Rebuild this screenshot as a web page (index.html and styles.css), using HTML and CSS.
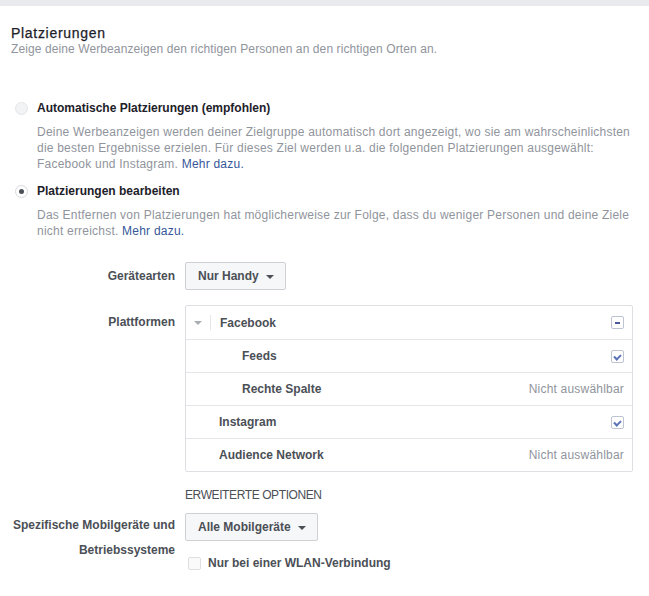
FILE: index.html
```html
<!DOCTYPE html>
<html lang="de">
<head>
<meta charset="utf-8">
<title>Platzierungen</title>
<link rel="stylesheet" href="styles.css">
</head>
<body>
<div class="topband"></div>
<section class="placements">
  <h2 class="title">Platzierungen</h2>
  <p class="subtitle">Zeige deine Werbeanzeigen den richtigen Personen an den richtigen Orten an.</p>

  <div class="option option-first">
    <label class="radio-row"><span class="radio"></span><span class="radio-label">Automatische Platzierungen (empfohlen)</span></label>
    <p class="desc">Deine Werbeanzeigen werden deiner Zielgruppe automatisch dort angezeigt, wo sie am wahrscheinlichsten<br>die besten Ergebnisse erzielen. Für dieses Ziel werden u.a. die folgenden Platzierungen ausgewählt:<br>Facebook und Instagram. <a href="#">Mehr dazu.</a></p>
  </div>

  <div class="option">
    <label class="radio-row"><span class="radio checked"></span><span class="radio-label">Platzierungen bearbeiten</span></label>
    <p class="desc">Das Entfernen von Platzierungen hat möglicherweise zur Folge, dass du weniger Personen und deine Ziele<br>nicht erreichst. <a href="#">Mehr dazu.</a></p>
  </div>

  <div class="field field-devices">
    <div class="field-label">Gerätearten</div>
    <div class="field-body">
      <button class="select">Nur Handy <span class="caret"></span></button>
    </div>
  </div>

  <div class="field field-platforms">
    <div class="field-label label-row">Plattformen</div>
    <div class="field-body">
      <div class="platforms">
        <div class="prow">
          <span class="toggle"><span class="caret caret-light"></span></span>
          <span class="pname">Facebook</span>
          <span class="cbox minus"></span>
        </div>
        <div class="prow sub">
          <span class="pname">Feeds</span>
          <span class="cbox checked"></span>
        </div>
        <div class="prow sub">
          <span class="pname">Rechte Spalte</span>
          <span class="na">Nicht auswählbar</span>
        </div>
        <div class="prow top">
          <span class="pname">Instagram</span>
          <span class="cbox checked"></span>
        </div>
        <div class="prow top">
          <span class="pname">Audience Network</span>
          <span class="na">Nicht auswählbar</span>
        </div>
      </div>
    </div>
  </div>

  <div class="field field-advanced">
    <div class="field-label"></div>
    <div class="field-body"><div class="advanced">ERWEITERTE OPTIONEN</div></div>
  </div>

  <div class="field field-mobile">
    <div class="field-label label-multi">Spezifische Mobilgeräte und Betriebssysteme</div>
    <div class="field-body">
      <button class="select">Alle Mobilgeräte <span class="caret"></span></button>
      <label class="wifi"><span class="cbox empty"></span><span class="wifi-label">Nur bei einer WLAN-Verbindung</span></label>
    </div>
  </div>
</section>
</body>
</html>
```

FILE: styles.css
```css
* { box-sizing: border-box; }

html, body {
  margin: 0;
  padding: 0;
  background: #ffffff;
}

body {
  font-family: "Liberation Sans", Arial, Helvetica, sans-serif;
  font-size: 12px;
  line-height: 16px;
  color: #1d2129;
}

.topband {
  height: 6px;
  background: #e9eaed;
}

.placements {
  padding: 19px 16px 0 11px;
}

.title {
  margin: 0;
  font-size: 14px;
  line-height: 16px;
  font-weight: normal;
  letter-spacing: 0.7px;
  color: #1d2129;
  -webkit-text-stroke: 0.25px #1d2129;
}

.subtitle {
  margin: 0;
  color: #90949c;
  letter-spacing: 0.1px;
}

.option {
  padding-left: 4px;
}

.option-first { margin-top: 43px; }
.option + .option { margin-top: 11px; }

.radio-row {
  display: flex;
  align-items: center;
  gap: 9px;
  font-weight: bold;
  color: #1d2129;
}

.radio {
  width: 13px;
  height: 13px;
  border-radius: 50%;
  border: 1px solid #e4e5e8;
  background: #f2f3f5;
  position: relative;
  flex: none;
}

.radio.checked {
  background: #ffffff;
  border-color: #d7d9dd;
}

.radio.checked::after {
  content: "";
  position: absolute;
  left: 3px;
  top: 3px;
  width: 5px;
  height: 5px;
  border-radius: 50%;
  background: #4b4f56;
}

.desc {
  margin: 8px 0 0 22px;
  color: #90949c;
  letter-spacing: 0.22px;
  white-space: nowrap;
}

.desc a {
  color: #365899;
  text-decoration: none;
}

.field {
  display: grid;
  grid-template-columns: 174px 1fr;
  column-gap: 0;
}

.field-label {
  text-align: right;
  padding-right: 10px;
  font-weight: bold;
  color: #4b4f56;
}

.field-devices {
  margin-top: 23px;
  align-items: center;
}

.field-platforms { margin-top: 15px; }

.label-row { padding-top: 9px; }

.select {
  display: inline-flex;
  align-items: center;
  gap: 7px;
  height: 28px;
  padding: 0 11px 0 12px;
  background: #f6f7f9;
  border: 1px solid #ced0d4;
  border-radius: 2px;
  font-family: inherit;
  font-size: 12px;
  font-weight: bold;
  color: #4b4f56;
}

.caret {
  width: 0;
  height: 0;
  border-left: 4px solid transparent;
  border-right: 4px solid transparent;
  border-top: 4px solid #4b4f56;
  margin-top: 1px;
}

.caret-light { border-top-color: #a9adb4; }

.platforms {
  border: 1px solid #dddfe2;
  border-radius: 2px;
}

.prow {
  display: flex;
  align-items: center;
  height: 33px;
  padding: 0 8px 0 33px;
  border-top: 1px solid #e5e6e9;
  font-weight: bold;
  color: #4b4f56;
}

.prow:first-child {
  border-top: none;
  padding-left: 8px;
}

.prow.sub { padding-left: 56px; }

.toggle {
  display: flex;
  align-items: center;
  height: 15px;
  padding-right: 8px;
  margin-right: 9px;
  border-right: 1px solid #e5e6e9;
}

.pname { flex: 1; }

.na {
  font-weight: normal;
  color: #90949c;
  letter-spacing: 0.2px;
}

.cbox {
  width: 13px;
  height: 13px;
  border: 1px solid #bec3d1;
  border-radius: 2px;
  background: #ffffff;
  position: relative;
  flex: none;
}

.cbox.minus::after {
  content: "";
  position: absolute;
  left: 3px;
  top: 5px;
  width: 5px;
  height: 2px;
  background: #4a5a9a;
}

.cbox.checked::after {
  content: "";
  position: absolute;
  left: 3px;
  top: 2px;
  width: 3px;
  height: 5px;
  border-right: 2px solid #5b74b8;
  border-bottom: 2px solid #5b74b8;
  transform: rotate(45deg);
}

.cbox.empty {
  border-color: #dddfe2;
  background: #fafafa;
}

.field-advanced { margin-top: 15px; }

.advanced {
  color: #4b4f56;
  letter-spacing: -0.4px;
}

.field-mobile { margin-top: 10px; }

.label-multi {
  line-height: 25px;
}

.wifi {
  display: flex;
  align-items: center;
  gap: 7px;
  margin-top: 14px;
  padding-left: 3px;
  font-weight: bold;
  color: #4b4f56;
}
```
